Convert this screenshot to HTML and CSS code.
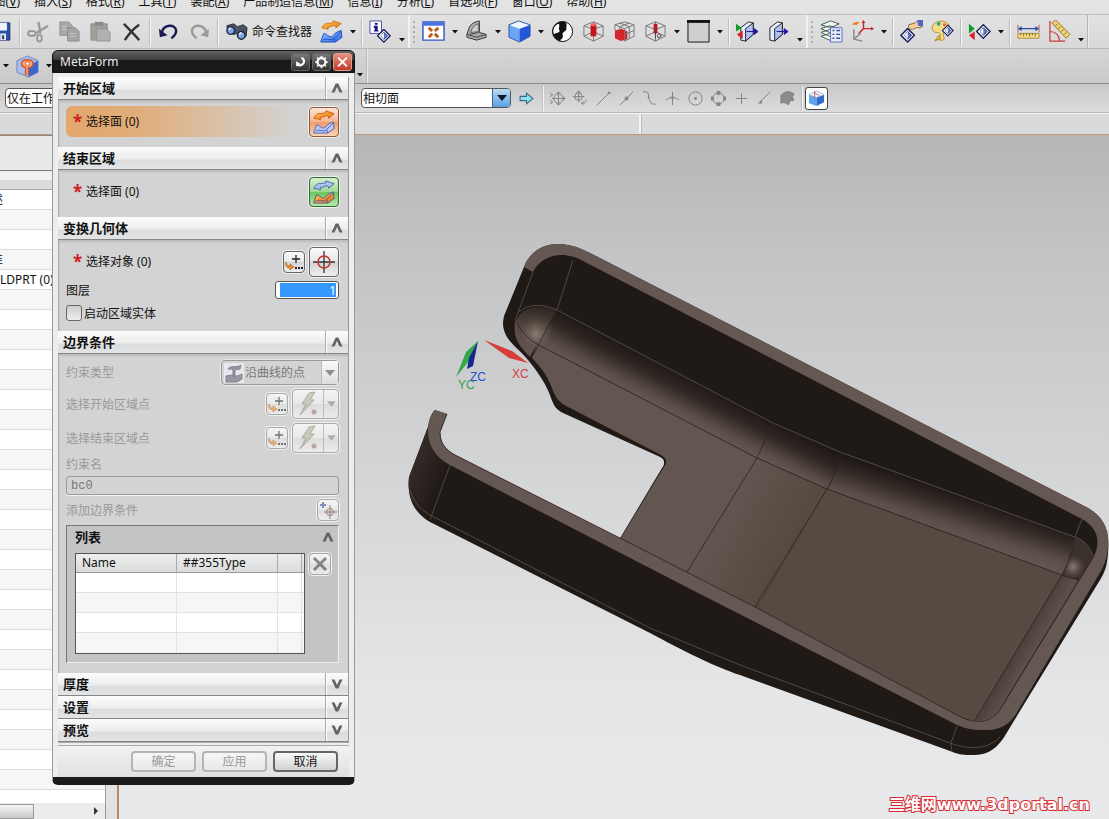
FILE: index.html
```html
<!DOCTYPE html>
<html lang="zh-CN">

<head>
    <meta charset="UTF-8">
    <meta name="viewport" content="width=device-width, initial-scale=1.0">
    <title>MetaForm</title>
    <link rel="stylesheet" href="styles.css">
</head>

<body>
    <svg class="symbols" aria-hidden="true">
        <linearGradient id="blueFace" x1="0" y1="0" x2="1" y2="1">
            <stop offset="0" stop-color="#9cc4ff" />
            <stop offset="1" stop-color="#2b62e0" />
        </linearGradient>
        <linearGradient id="orangeFace" x1="0" y1="0" x2="1" y2="1">
            <stop offset="0" stop-color="#ffd257" />
            <stop offset="1" stop-color="#e8640c" />
        </linearGradient>
        <symbol id="wirecube" viewBox="0 0 24 24">
            <path d="M2 6L12 2L22 6V17L12 22L2 17ZM2 6L12 10L22 6M12 10V22M12 2V12M2 17L12 12L22 17" fill="none" stroke="#777" />
        </symbol>
        <symbol id="diamond" viewBox="0 0 16 16">
            <path d="M1 8L8 1L15 8L8 15Z" fill="#fff" stroke="#15205c" stroke-width="1.500" />
            <path d="M5 8L8 4L12 8L8 12Z" fill="#5d7bd0" stroke="#15205c" />
            <path d="M8 4L5 8L8 12Z" fill="#fff" />
        </symbol>
        <symbol id="drop" viewBox="0 0 6 4">
            <path d="M0 0H6L3 3.500Z" fill="#111" />
        </symbol>
        <symbol id="up" viewBox="0 0 14 12">
            <path d="M1.500 10.500L5.700 1.500H8.300L12.500 10.500H9.500L7 5L4.500 10.500Z" fill="#636363" />
        </symbol>
        <symbol id="down" viewBox="0 0 14 12">
            <path d="M1.500 1.500L5.700 10.500H8.300L12.500 1.500H9.500L7 7L4.500 1.500Z" fill="#636363" />
        </symbol>
        <symbol id="points" viewBox="0 0 20 20">
            <path d="M12 3V11M8 7H16" stroke="#222" stroke-width="1.300" />
            <path d="M2 10C2 13 4 14 6 14V12L10 15L6 18V16C3 16 1 14 2 10Z" fill="#f09030" stroke="#a55510" stroke-width=".6" />
            <path d="M11 16h2M14 16h2M17 16h2" stroke="#222" stroke-width="2" />
        </symbol>
        <symbol id="bolt" viewBox="0 0 24 26">
            <path d="M13 2L19 1L14 9H18L4 24L10 13H6Z" fill="#b3b79a" stroke="#82846f" />
            <circle cx="18" cy="21" r="2.500" fill="#a07a76" />
        </symbol>
        <symbol id="sheetTop" viewBox="0 0 24 12">
            <path d="M1 9C3 5 6 3 8 4L14 3V1L23 4L17 9V7C13 5 11 9 8 8V11C6 9 4 10 1 9Z" />
        </symbol>
        <symbol id="sheetLow" viewBox="0 0 24 14">
            <path d="M1 12L4 4C8 5 11 10 14 6C16 3 19 2 22 1L23 8L16 13H1Z" />
            <path d="M3 11C8 8 12 13 15 9L22 2M16 13L15 9" fill="none" />
        </symbol>
    </svg>

    <nav class="menubar">
        <a href="#" class="clipped">视图(<u>V</u>)</a>
        <a href="#">插入(<u>S</u>)</a>
        <a href="#">格式(<u>R</u>)</a>
        <a href="#">工具(<u>T</u>)</a>
        <a href="#">装配(<u>A</u>)</a>
        <a href="#">产品制造信息(<u>M</u>)</a>
        <a href="#">信息(<u>I</u>)</a>
        <a href="#">分析(<u>L</u>)</a>
        <a href="#">首选项(<u>F</u>)</a>
        <a href="#">窗口(<u>O</u>)</a>
        <a href="#">帮助(<u>H</u>)</a>
    </nav>

    <div class="toolbar">
        <button class="tool save" aria-label="保存"><svg viewBox="0 0 12 24"><path d="M-8 3H10V21H-8Z" fill="#2c51a8" stroke="#1b2f6e" /><path d="M-4 3H7V11H-4Z" fill="#eef4ff" /><path d="M0 14H6V21H0Z" fill="#dfe4ee" /><path d="M2 16H4V20H2Z" fill="#1b2f6e" /></svg></button>
        <span class="sep"></span>
        <button class="tool" aria-label="剪切"><svg viewBox="0 0 24 24"><path d="M12 2L14 14M22 6L9 14" stroke="#999" stroke-width="2.500" /><ellipse cx="5" cy="14" rx="4" ry="2.500" fill="none" stroke="#999" stroke-width="2" /><ellipse cx="13" cy="19" rx="2.500" ry="3.500" fill="none" stroke="#999" stroke-width="2" /></svg></button>
        <button class="tool" aria-label="复制"><svg viewBox="0 0 24 24"><path d="M2 2H11L15 6V16H2Z" fill="#a8a8a8" stroke="#919191" /><path d="M10 8H18L22 12V22H10Z" fill="#a3a3a3" stroke="#8d8d8d" /><path d="M4 7H9M4 10H9M12 14H19M12 17H19" stroke="#c9c9c9" /></svg></button>
        <button class="tool" aria-label="粘贴"><svg viewBox="0 0 24 24"><path d="M2 4H19V21H2Z" fill="#a19f98" stroke="#8f8f8f" /><path d="M6 2H15V6H6Z" fill="#8a8a8a" /><path d="M8 9H18L22 13V22H8Z" fill="#b0b0b0" stroke="#939393" /></svg></button>
        <button class="tool" aria-label="删除"><svg viewBox="0 0 24 24"><path d="M4 4C9 9 15 15 20 21M20 5C14 9 9 15 5 21" fill="none" stroke="#333" stroke-width="2.500" /></svg></button>
        <span class="sep"></span>
        <button class="tool" aria-label="撤消"><svg viewBox="0 0 24 24"><path d="M5 13C7 4 19 4 20 11C20 15 18 17 15 19" fill="none" stroke="#1b1b52" stroke-width="2.500" /><path d="M2 9L3 18L11 16Z" fill="#1b1b52" /></svg></button>
        <button class="tool" aria-label="重做"><svg viewBox="0 0 24 24"><path d="M19 13C17 4 5 4 4 11C4 15 6 17 9 19" fill="none" stroke="#999" stroke-width="2.500" /><path d="M22 9L21 18L13 16Z" fill="#999" /></svg></button>
        <span class="sep"></span>
        <button class="tool" aria-label="查找"><svg viewBox="0 0 24 24"><path d="M2 6L9 4L13 7L19 5L23 8L22 17L16 20L12 14L9 15L3 12Z" fill="#4c5468" stroke="#2a2e3c" /><circle cx="6" cy="11" r="4" fill="#7da3e8" stroke="#23283a" stroke-width="1.500" /><circle cx="17" cy="16" r="4" fill="#7da3e8" stroke="#23283a" stroke-width="1.500" /><path d="M4 10L6 8M15 15L17 13" stroke="#fff" stroke-width="1.500" /></svg></button>
        <button class="finder">命令查找器</button>
        <button class="tool" aria-label="变换片体"><svg viewBox="0 0 24 24"><use href="#sheetTop" width="24" height="11" fill="url(#orangeFace)" stroke="#c9720c" /><use href="#sheetLow" y="10" width="24" height="14" fill="url(#blueFace)" stroke="#1d50c8" /></svg></button>
        <button class="drop" aria-label="更多"><svg viewBox="0 0 6 4"><use href="#drop" /></svg></button>
        <span class="sep"></span>
        <button class="tool" aria-label="信息"><svg viewBox="0 0 24 24"><path d="M1 1H13V14H1Z" fill="#fff" stroke="#4a4aa8" /><path d="M6 3H9V5H6ZM5 6H9V11H10V12H5V11H6V8H5Z" fill="#10107a" /><use href="#diamond" x="8" y="9" width="15" height="15" /></svg></button>
        <button class="drop low" aria-label="更多"><svg viewBox="0 0 6 4"><use href="#drop" /></svg></button>
        <span class="grip"></span>
        <button class="tool" aria-label="适合窗口"><svg viewBox="0 0 24 24"><path d="M1 2H23V21H1Z" fill="#fff" stroke="#3656c4" stroke-width="1.500" /><path d="M1 2H23V6H1Z" fill="#4b74e0" /><path d="M7 8L17 18M17 8L7 18" stroke="#b8581c" stroke-width="3" stroke-dasharray="5 4" /></svg></button>
        <button class="drop" aria-label="更多"><svg viewBox="0 0 6 4"><use href="#drop" /></svg></button>
        <button class="tool" aria-label="定向视图"><svg viewBox="0 0 24 24"><path d="M2 15L4 9C5 5 9 2 15 1V13L22 15V18L12 21L2 18Z" fill="#a9a9a9" stroke="#333" /><path d="M6 13C7 8 10 5 14 4V12Z" fill="#cfcfcf" stroke="#666" /><path d="M2 15L12 18L22 15M14 13L5 15" fill="none" stroke="#444" /></svg></button>
        <button class="drop" aria-label="更多"><svg viewBox="0 0 6 4"><use href="#drop" /></svg></button>
        <button class="tool" aria-label="着色"><svg viewBox="0 0 24 24"><path d="M1 5L12 9V23L1 18Z" fill="#6ba6f5" /><path d="M12 9L23 5V17L12 23Z" fill="#2458da" /><path d="M1 5L11 1L23 5L12 9Z" fill="#eef6ff" /><path d="M1 5L11 1L23 5V17L12 23L1 18Z" fill="none" stroke="#2c4fa6" /></svg></button>
        <button class="drop" aria-label="更多"><svg viewBox="0 0 6 4"><use href="#drop" /></svg></button>
        <button class="tool" aria-label="背景"><svg viewBox="0 0 24 24"><circle cx="12" cy="12" r="10.500" fill="#111" /><path d="M15 2C23 5 25 14 19 20C16 22 12 23 9 21C12 20 13 18 12 15C12 12 17 12 16 8C16 6 17 4 15 2Z" fill="#fff" /><path d="M3 15C1 10 4 5 8 4C10 6 7 9 9 11C9 14 5 13 3 15Z" fill="#fff" /><circle cx="12" cy="12" r="10.500" fill="none" stroke="#111" /></svg></button>
        <button class="tool" aria-label="剖切一"><svg viewBox="0 0 24 24"><use href="#wirecube" width="24" height="24" /><path d="M9 5H15V17H9Z" fill="#c4141c" /><ellipse cx="12" cy="5" rx="3" ry="1.500" fill="#f06464" /></svg></button>
        <button class="tool" aria-label="剖切二"><svg viewBox="0 0 24 24"><path d="M2 11L9 9L15 12V20L8 22L2 19Z" fill="#d3272d" /><path d="M2 5L12 2L22 5V17L12 22M2 11V5L12 9L22 5M12 9V22M7 3L17 7V19M17 3L7 7V11M12 15L22 11" fill="none" stroke="#777" /></svg></button>
        <button class="tool" aria-label="剖切三"><svg viewBox="0 0 24 24"><use href="#wirecube" width="24" height="24" /><path d="M10 4H14V14H10Z" fill="#b81c22" /><path d="M12 10V19M14 16L16 14L18 17L15 19Z" fill="none" stroke="#444" /></svg></button>
        <button class="drop" aria-label="更多"><svg viewBox="0 0 6 4"><use href="#drop" /></svg></button>
        <button class="tool" aria-label="背景色"><svg viewBox="0 0 24 24"><path d="M1 1H23V23H1Z" fill="#cfcfcf" stroke="#111" /><path d="M0 0H24V3H0Z" fill="#111" /></svg></button>
        <button class="drop" aria-label="更多"><svg viewBox="0 0 6 4"><use href="#drop" /></svg></button>
        <span class="sep"></span>
        <button class="tool" aria-label="移动面"><svg viewBox="0 0 24 24"><path d="M5 8L13 2L18 3V15L10 22L5 21Z" fill="#e4ecff" stroke="#222" /><path d="M10 9L18 3V15L10 22Z" fill="#aebff0" stroke="#222" /><path d="M11 12H19V9L23 12L19 15V12" fill="#1717a0" stroke="#1717a0" /><path d="M0 4L6 8L0 12Z" fill="#109a28" /><path d="M7 11L1 15L7 20Z" fill="#d4222a" /></svg></button>
        <button class="tool" aria-label="拉出面"><svg viewBox="0 0 24 24"><path d="M3 8L11 2L16 3V15L8 22L3 21Z" fill="#e4ecff" stroke="#222" /><path d="M8 9L16 3V15L8 22Z" fill="#aebff0" stroke="#222" /><path d="M10 12H18V9L22 12L18 15V12" fill="#1717a0" stroke="#1717a0" /></svg></button>
        <button class="drop low" aria-label="更多"><svg viewBox="0 0 6 4"><use href="#drop" /></svg></button>
        <span class="grip"></span>
        <button class="tool" aria-label="图层设置"><svg viewBox="0 0 24 24"><path d="M1 17L10 21L20 17L10 14ZM1 13L10 17L20 13L10 10ZM1 9L10 13L20 9L10 6ZM1 5L11 1L20 4L11 8Z" fill="#f3f7f3" stroke="#3c5c50" /><path d="M11 8H23V23H11Z" fill="#e6ecff" stroke="#5670c0" /><path d="M13 11H15M17 11H21M13 15H15M17 15H21M13 19H15M17 19H21" stroke="#3b4f98" stroke-width="1.500" /></svg></button>
        <button class="tool" aria-label="WCS"><svg viewBox="0 0 24 24"><path d="M13 1V9M13 9L23 9M13 9L8 14" fill="none" stroke="#c82a2a" stroke-width="1.500" /><path d="M11 3L13 0L15 3ZM21 7L24 9L21 11Z" fill="#c82a2a" /><path d="M3 10V20L12 22M3 20L10 14" fill="none" stroke="#8a8a8a" stroke-width="1.500" /><path d="M1 5C3 2 5 2 9 2L6 5Z" fill="#ee7a1c" /></svg></button>
        <button class="drop" aria-label="更多"><svg viewBox="0 0 6 4"><use href="#drop" /></svg></button>
        <span class="sep"></span>
        <button class="tool" aria-label="编辑显示"><svg viewBox="0 0 24 24"><path d="M9 5L16 3L18 1L23 2L22 8L17 8L13 10L9 9Z" fill="#f4cf9c" stroke="#8c6c40" /><path d="M18 0H24V7L19 6Z" fill="#5266c8" /><use href="#diamond" x="0" y="8" width="16" height="16" /></svg></button>
        <button class="tool" aria-label="颜色"><svg viewBox="0 0 24 24"><path d="M3 4C8 -1 19 1 19 7C19 11 15 10 13 13C12 17 15 18 13 21H9C9 17 11 14 8 13C2 14 -1 9 3 4Z" fill="#f9dc86" stroke="#b09038" /><circle cx="8" cy="4" r="2" fill="#2ba3a5" /><circle cx="14" cy="5" r="1.500" fill="#d9643c" /><path d="M4 22L8 16L10 19Z" fill="#f4c33c" stroke="#b08a20" /><use href="#diamond" x="11" y="4" width="13" height="14" /></svg></button>
        <span class="sep"></span>
        <button class="tool" aria-label="显示隐藏"><svg viewBox="0 0 24 24"><path d="M1 4L7 9L1 14Z" fill="#109a28" /><path d="M7 12L1 16L7 21Z" fill="#d4222a" /><use href="#diamond" x="8" y="4" width="16" height="16" /></svg></button>
        <button class="drop" aria-label="更多"><svg viewBox="0 0 6 4"><use href="#drop" /></svg></button>
        <span class="sep"></span>
        <button class="tool" aria-label="测量距离"><svg viewBox="0 0 24 24"><path d="M1 5V13M23 5V13" stroke="#c85050" /><path d="M2 9H22M5 7L2 9L5 11M19 7L22 9L19 11" fill="none" stroke="#2b4ca8" stroke-width="1.300" /><path d="M1 14H23V19H1Z" fill="#f6dd8c" stroke="#a68c3c" /><path d="M4 14V16M7 14V17M10 14V16M13 14V17M16 14V16M19 14V17" stroke="#76601c" /></svg></button>
        <button class="tool" aria-label="测量角度"><svg viewBox="0 0 24 24"><path d="M2 1V22H18M2 12C8 12 12 16 12 22" fill="none" stroke="#cc3844" stroke-width="1.300" /><path d="M4 3L8 0L23 15L19 19Z" fill="#f2d272" stroke="#8c7430" /><path d="M8 6L10 4M11 9L13 7M14 12L16 10M17 15L19 13" stroke="#76601c" /></svg></button>
        <button class="drop low" aria-label="更多"><svg viewBox="0 0 6 4"><use href="#drop" /></svg></button>
        <span class="bar-end"></span>
    </div>

    <div class="toolbar second">
        <button class="drop" aria-label="更多"><svg viewBox="0 0 6 4"><use href="#drop" /></svg></button>
        <button class="tool" aria-label="特征"><svg viewBox="0 0 24 24"><path d="M1 6L12 1L23 6V18L13 23L1 18Z" fill="#a9c0f0" stroke="#7088c0" /><path d="M13 11L23 6V18L13 23Z" fill="#3c66cf" /><path d="M10 21V13C4 12 4 5 12 5C20 5 19 13 13 13V21" fill="#f7a982" stroke="#d8541c" stroke-width="1.500" /><circle cx="12" cy="9" r="2" fill="#fff" stroke="#d8541c" /></svg></button>
        <button class="drop" aria-label="更多"><svg viewBox="0 0 6 4"><use href="#drop" /></svg></button>
        <span class="under-dialog"></span>
        <button class="drop low" aria-label="更多"><svg viewBox="0 0 6 4"><use href="#drop" /></svg></button>
        <span class="bar-end"></span>
    </div>

    <div class="selectbar">
        <label class="combo scope"><select aria-label="选择范围"><option>仅在工作部件内</option></select></label>
        <label class="combo rule">
            <select aria-label="面规则"><option>相切面</option></select>
            <span class="combo-arrow"><svg viewBox="0 0 12 8"><path d="M1 1H11L6 7Z" fill="#101828" /></svg></span>
        </label>
        <button class="next" aria-label="下一步"><svg viewBox="0 0 14 14"><path d="M1 5H7V2L13 7L7 12V9H1Z" fill="#8fe0f2" stroke="#3b6a80" /></svg></button>
        <span class="sep"></span>
        <button class="snap" aria-label="启用捕捉"><svg viewBox="0 0 18 18"><circle cx="10" cy="9" r="5" /><path d="M10 2V16M3 9H17M8 4L10 2L12 4M8 14L10 16L12 14M15 7L17 9L15 11M1 3L4 5L1 7M1 11L4 13L1 15" /></svg></button>
        <button class="snap" aria-label="清除捕捉"><svg viewBox="0 0 18 18"><circle cx="7" cy="7" r="4" /><path d="M7 1V13M1 7H13M5 3L7 1L9 3M10 14C13 15 15 13 15 10M13 12L10 14L12 16" /></svg></button>
        <button class="snap" aria-label="端点"><svg viewBox="0 0 18 18"><path d="M2 16L15 3" /><circle class="dot" cx="15" cy="3" r="1.500" /></svg></button>
        <button class="snap" aria-label="中点"><svg viewBox="0 0 18 18"><path d="M2 16L16 2" /><circle class="dot" cx="9" cy="9" r="2" /></svg></button>
        <button class="snap" aria-label="控制点"><svg viewBox="0 0 18 18"><path d="M2 2H6C9 3 7 7 9 10C10 15 12 15 16 15" /><circle class="dot" cx="8" cy="8" r="1" /></svg></button>
        <button class="snap" aria-label="交点"><svg viewBox="0 0 18 18"><path d="M9 2V16M2 11C5 7 13 7 16 11" /><circle class="dot" cx="9" cy="8" r="1.500" /></svg></button>
        <button class="snap" aria-label="圆心"><svg viewBox="0 0 18 18"><circle cx="9" cy="9" r="7" /><circle class="dot" cx="9" cy="9" r="1.500" /></svg></button>
        <button class="snap" aria-label="象限点"><svg viewBox="0 0 18 18"><circle cx="9" cy="9" r="6" /><path class="dot" d="M7 1H11V5H7ZM7 13H11V17H7ZM1 7H4V11H1ZM14 7H17V11H14Z" /></svg></button>
        <button class="snap" aria-label="现有点"><svg viewBox="0 0 18 18"><path d="M9 4V15M3 9H15" /></svg></button>
        <button class="snap" aria-label="曲线上的点"><svg viewBox="0 0 18 18"><path d="M2 15L15 2" /><circle class="dot" cx="5" cy="13" r="1.500" /></svg></button>
        <button class="snap" aria-label="面上的点"><svg viewBox="0 0 18 18"><path d="M2 6C5 2 10 0 16 4L12 11L10 16C8 13 4 13 2 14Z" fill="#8b8b8f" /><circle class="dot" cx="14" cy="10" r="2" /></svg></button>
        <span class="sep"></span>
        <button class="toggle" aria-label="小平面"><svg viewBox="0 0 18 18"><path d="M1 5L9 8V17L1 14Z" fill="#62a4ec" /><path d="M9 8L17 5V13L9 17Z" fill="#2e6cc8" /><path d="M1 5L9 1L17 5L9 8Z" fill="#f3f8ff" stroke="#7b99c4" stroke-width=".7" /><path d="M7 1V9M7 3L12 6" fill="none" stroke="#c85a5a" /></svg></button>
    </div>

    <div class="cuebar">
        <div class="cue"></div>
        <div class="status"></div>
    </div>

    <main class="workspace">
        <aside class="navigator">
            <div class="nav-title"></div>
            <div class="nav-head"></div>
            <ul class="tree">
                <li><span class="tail">描述</span></li>
                <li></li>
                <li></li>
                <li><span class="tail">基准</span></li>
                <li>LDPRT&nbsp;(0)</li>
            </ul>
            <div class="scrollbar">
                <span class="thumb"></span>
                <svg viewBox="0 0 6 8"><path d="M1 0L5 4L1 8Z" fill="#333" /></svg>
            </div>
        </aside>
        <div class="splitter"></div>

        <section class="viewport">
            <svg class="model" viewBox="119 135 990 684" preserveAspectRatio="xMinYMin slice">
                <defs>
                    <linearGradient id="filletA" gradientUnits="userSpaceOnUse" x1="652" y1="360" x2="633" y2="397">
                        <stop offset="0" stop-color="#201a17" />
                        <stop offset=".3" stop-color="#2e2622" />
                        <stop offset=".75" stop-color="#5b4e48" />
                        <stop offset="1" stop-color="#685a54" />
                    </linearGradient>
                    <linearGradient id="filletB" gradientUnits="userSpaceOnUse" x1="950" y1="492" x2="937" y2="532">
                        <stop offset="0" stop-color="#201a17" />
                        <stop offset=".3" stop-color="#332a26" />
                        <stop offset=".75" stop-color="#5b4e48" />
                        <stop offset="1" stop-color="#63554f" />
                    </linearGradient>
                    <linearGradient id="fade" gradientUnits="userSpaceOnUse" x1="725" y1="510" x2="790" y2="545">
                        <stop offset="0" stop-color="#63554f" />
                        <stop offset="1" stop-color="#574a42" />
                    </linearGradient>
                    <linearGradient id="filletC" gradientUnits="userSpaceOnUse" x1="1018" y1="647" x2="1040" y2="660">
                        <stop offset="0" stop-color="#4a3f39" />
                        <stop offset=".6" stop-color="#5d504a" />
                        <stop offset="1" stop-color="#453a35" />
                    </linearGradient>
                    <linearGradient id="leftWall" gradientUnits="userSpaceOnUse" x1="412" y1="470" x2="442" y2="482">
                        <stop offset="0" stop-color="#332a26" />
                        <stop offset="1" stop-color="#201a17" />
                    </linearGradient>
                    <linearGradient id="corner" gradientUnits="userSpaceOnUse" x1="538" y1="303" x2="530" y2="350">
                        <stop offset="0" stop-color="#2a221f" />
                        <stop offset=".6" stop-color="#56493f" />
                        <stop offset="1" stop-color="#63554f" />
                    </linearGradient>
                    <radialGradient id="glint">
                        <stop offset="0" stop-color="#8b7e78" />
                        <stop offset=".5" stop-color="#6a5c56" stop-opacity=".6" />
                        <stop offset="1" stop-color="#4a3f3a" stop-opacity="0" />
                    </radialGradient>
                </defs>

                <!-- outer walls -->
                <path d="M524 267C530 251 545 243 560 244C573 245 580 248 590 253L1088 508C1104 517 1110 531 1108 553C1107 566 1105 572 1100 580L1006 734C998 748 988 756 970 755C962 755 957 754 950 751L740 675C715 667 680 649 650 633L430 522C413 512 407 497 409 477L428 427C429 420 431 414 435 410L447 414L440 432C440 446 449 452 457 456L620 539L663 467C665 462 665 459 658 456L563 413C555 409 553 404 550 395C544 380 536 370 528 360C520 350 509 343 505 333C502 325 503 322 504 316Z" fill="#201a17" />
                <path d="M428 427C428 445 437 456 450 464L430 520C413 511 407 497 409 477Z" fill="url(#leftWall)" />

                <!-- floor -->
                <path d="M532 358L537 344L757 458L690 580L620 539L664 467C668 461 666 458 661 455L570 408C560 403 557 400 553 391C549 378 541 367 532 358Z" fill="#63554f" />
                <path d="M757 458L827 489L755 612L687 576Z" fill="url(#fade)" />
                <path d="M827 489L1062 575L975 722L955 716L755 612Z" fill="#574a42" />

                <!-- fillets -->
                <path d="M557 310L773 423L840 452C839 465 834 478 827 489L757 458L537 344Z" fill="url(#filletA)" />
                <path d="M840 452L1075 537C1072 552 1068 564 1062 575L827 489C835 476 839 465 840 452Z" fill="url(#filletB)" />
                <path d="M515 325C518 309 535 302 557 310L537 344L530 357C520 347 513 338 515 325Z" fill="url(#corner)" />
                <path d="M1062 575L1080 578L1000 709C994 718 987 722 975 721Z" fill="url(#filletC)" />
                <path d="M1075 537C1086 541 1093 548 1092 560L1078 581L1062 575Z" fill="#3a312d" />
                <circle cx="536" cy="334" r="20" fill="url(#glint)" />
                <circle cx="1073" cy="567" r="13" fill="url(#glint)" />

                <!-- rim -->
                <path d="M524 267C530 251 545 243 560 244C573 245 580 248 590 253L1088 508C1104 517 1110 531 1108 547C1107 560 1103 568 1098 576L1016 714C1009 726 996 731 983 730C973 730 966 729 957 725L700 594L450 465C437 458 428 447 428 431C428 422 431 414 435 410L447 414L440 432C440 446 449 452 457 456L620 538L755 607L955 714C964 720 972 722 982 720C990 719 996 715 1001 708L1094 556C1101 542 1098 528 1082 519L585 262C573 255 562 254 553 256C543 259 536 265 533 272Z" fill="#655752" />

                <!-- edges -->
                <g fill="none" stroke="#5c5551" stroke-width=".8">
                    <path d="M573 260L557 310M533 272L516 318C513 330 518 338 530 350M519 312C527 304 542 303 557 310L773 423L840 452L1075 537C1085 541 1092 548 1093 558" />
                    <path d="M1082 519L1075 537M450 465L430 520M410 490C414 503 420 509 430 515L650 628L740 665L950 743C968 750 988 750 1000 737M957 726L951 743L952 752" />
                </g>
                <g fill="none" stroke="#2a2320" stroke-width=".8">
                    <path d="M557 310L532 357M517 323C522 332 528 339 537 344L757 458L827 489L1062 575C1068 578 1074 579 1079 578M773 423L757 458L687 572M840 452C839 466 835 476 827 489L755 607M1075 537C1073 552 1069 564 1062 575L975 720M620 539L663 467" />
                    <path d="M447 414L440 432C440 446 449 452 457 456L620 538L755 607L955 714C980 728 994 720 1001 708L1094 556" />
                </g>

                <!-- work coordinate system -->
                <path d="M478 341L466 352L456 377L469 361Z" fill="#35a848" />
                <path d="M478 341L469 358L467 369L473 366Z" fill="#16288f" />
                <path d="M484 340L512 351L528 363L509 358Z" fill="#d63c38" />
                <g class="axis">
                    <text x="512" y="378" fill="#d04040">XC</text>
                    <text x="458" y="389" fill="#3aa048">YC</text>
                    <text x="470" y="381" fill="#2250d0">ZC</text>
                </g>
            </svg>
            <div class="watermark">三维网www.3dportal.cn</div>
        </section>
    </main>

    <form class="dialog">
        <header class="titlebar">
            <h1>MetaForm</h1>
            <button type="button" aria-label="重置"><svg viewBox="0 0 16 16"><path d="M4 11C8 13 12 11 12 7C12 5 11 4 9 3" fill="none" stroke="#fff" stroke-width="2.500" /><path d="M3 7V13L8 10Z" fill="#fff" /></svg></button>
            <button type="button" aria-label="设置"><svg viewBox="0 0 16 16"><circle cx="8" cy="8" r="4.500" fill="none" stroke="#fff" stroke-width="2.500" /><path d="M8 1V3M8 13V15M1 8H3M13 8H15M3 3L4 4M12 12L13 13M3 13L4 12M12 4L13 3" stroke="#fff" stroke-width="2" /></svg></button>
            <button type="button" class="close" aria-label="关闭"><svg viewBox="0 0 16 16"><path d="M3 3L13 13M13 3L3 13" stroke="#fff" stroke-width="2.200" /></svg></button>
        </header>

        <div class="sections">
            <button type="button" class="section-head"><span>开始区域</span><i><svg viewBox="0 0 14 12"><use href="#up" /></svg></i></button>
            <div class="section pick">
                <div class="row">
                    <div class="highlight"><b>*</b>选择面 (0)</div>
                    <button type="button" class="big orange" aria-label="选择开始面"><svg viewBox="0 0 24 24"><use href="#sheetTop" width="24" height="11" fill="url(#orangeFace)" stroke="#c9580c" /><use href="#sheetLow" y="11" width="24" height="13" fill="#b9c9f6" stroke="#4860b8" /></svg></button>
                </div>
            </div>

            <button type="button" class="section-head"><span>结束区域</span><i><svg viewBox="0 0 14 12"><use href="#up" /></svg></i></button>
            <div class="section pick">
                <div class="row">
                    <div class="prompt"><b>*</b>选择面 (0)</div>
                    <button type="button" class="big green" aria-label="选择结束面"><svg viewBox="0 0 24 24"><use href="#sheetTop" width="24" height="11" fill="#a9c4ee" stroke="#4860b8" /><use href="#sheetLow" y="11" width="24" height="13" fill="url(#orangeFace)" stroke="#4a58a0" /></svg></button>
                </div>
            </div>

            <button type="button" class="section-head"><span>变换几何体</span><i><svg viewBox="0 0 14 12"><use href="#up" /></svg></i></button>
            <div class="section">
                <div class="row">
                    <div class="prompt"><b>*</b>选择对象 (0)</div>
                    <button type="button" class="small" aria-label="点构造器"><svg viewBox="0 0 20 20"><use href="#points" /></svg></button>
                    <button type="button" class="big" aria-label="选择对象"><svg viewBox="0 0 24 24"><path d="M12 1V23M1 12H23" stroke="#333" stroke-width="1.300" /><circle cx="12" cy="12" r="6" fill="none" stroke="#c83030" stroke-width="1.500" /></svg></button>
                </div>
                <div class="row">
                    <label for="layer">图层</label>
                    <input id="layer" class="layer" type="text" value="1">
                </div>
                <div class="row check">
                    <input id="solid" type="checkbox">
                    <label for="solid">启动区域实体</label>
                </div>
            </div>

            <button type="button" class="section-head"><span>边界条件</span><i><svg viewBox="0 0 14 12"><use href="#up" /></svg></i></button>
            <div class="section disabled">
                <div class="row">
                    <label for="ctype">约束类型</label>
                    <span class="type-box">
                        <svg viewBox="0 0 20 20"><path d="M4 6C6 2 14 5 17 2L16 6C13 7 12 6 11 7V13H9V7C7 5 6 7 4 6ZM2 13L8 12C11 14 14 13 18 11V16L13 19H2Z" fill="#9b96a5" stroke="#85808f" /></svg>
                        <select id="ctype" disabled><option>沿曲线的点</option></select>
                        <span class="type-arrow"><svg viewBox="0 0 12 8"><path d="M1 1H11L6 7Z" fill="#8d8d8d" /></svg></span>
                    </span>
                </div>
                <div class="row">
                    <span class="label">选择开始区域点</span>
                    <button type="button" class="small" disabled aria-label="点构造器"><svg viewBox="0 0 20 20"><use href="#points" /></svg></button>
                    <button type="button" class="split" disabled aria-label="推断点"><svg viewBox="0 0 24 26"><use href="#bolt" /></svg><span><svg viewBox="0 0 10 6"><path d="M0 0H10L5 6Z" fill="#888" /></svg></span></button>
                </div>
                <div class="row">
                    <span class="label">选择结束区域点</span>
                    <button type="button" class="small" disabled aria-label="点构造器"><svg viewBox="0 0 20 20"><use href="#points" /></svg></button>
                    <button type="button" class="split" disabled aria-label="推断点"><svg viewBox="0 0 24 26"><use href="#bolt" /></svg><span><svg viewBox="0 0 10 6"><path d="M0 0H10L5 6Z" fill="#888" /></svg></span></button>
                </div>
                <label class="label" for="cname">约束名</label>
                <input id="cname" class="cname" type="text" value="bc0" disabled>
                <div class="row">
                    <span class="label">添加边界条件</span>
                    <button type="button" class="small" disabled aria-label="添加"><svg viewBox="0 0 20 20"><path d="M5 2V8M2 5H8" stroke="#3c4c9c" stroke-width="2" /><path d="M12 5V19M6 12H19" stroke="#444" /><circle cx="12" cy="12" r="3.500" fill="none" stroke="#8c3030" /></svg></button>
                </div>
                <div class="list">
                    <div class="list-head"><span>列表</span><svg viewBox="0 0 14 12"><use href="#up" /></svg></div>
                    <div class="list-body">
                        <table>
                            <thead>
                                <tr><th class="wide">Name</th><th class="wide">##355Type</th><th></th><th class="edge"></th></tr>
                            </thead>
                            <tbody>
                                <tr><td></td><td></td><td></td><td></td></tr>
                                <tr><td></td><td></td><td></td><td></td></tr>
                                <tr><td></td><td></td><td></td><td></td></tr>
                                <tr><td></td><td></td><td></td><td></td></tr>
                            </tbody>
                        </table>
                        <button type="button" class="small" disabled aria-label="移除"><svg viewBox="0 0 20 20"><path d="M4 4L16 16M16 4L4 16" stroke="#444" stroke-width="3" /></svg></button>
                    </div>
                </div>
            </div>

            <button type="button" class="section-head"><span>厚度</span><i><svg viewBox="0 0 14 12"><use href="#down" /></svg></i></button>
            <button type="button" class="section-head"><span>设置</span><i><svg viewBox="0 0 14 12"><use href="#down" /></svg></i></button>
            <button type="button" class="section-head"><span>预览</span><i><svg viewBox="0 0 14 12"><use href="#down" /></svg></i></button>
        </div>

        <footer class="actions">
            <button type="button" disabled>确定</button>
            <button type="button" disabled>应用</button>
            <button type="button" class="cancel">取消</button>
        </footer>
    </form>
</body>

</html>
```
FILE: styles.css
```css
*{
    margin: 0;
    padding: 0;
    box-sizing: border-box;
}
body{
    display: flex;
    flex-direction: column;
    height: 100vh;
    overflow: hidden;
    background-color: #d9d9d9;
    color: #111;
    font: 12px/15px "Noto Sans", "Noto Sans CJK SC", sans-serif;
}
button, input, select{
    font: inherit;
    color: inherit;
    border: none;
    background: none;
    appearance: none;
}
svg{
    display: block;
    flex: none;
}
.symbols{
    position: absolute;
    width: 0;
    height: 0;
}

/* menu */
.menubar{
    display: flex;
    flex: none;
    align-items: flex-end;
    gap: 14px;
    height: 15px;
    padding-bottom: 5px;
    background-color: #e3e3e3;
    border-bottom: 1px solid #bdbdbd;
}
.menubar a{
    color: #111;
    text-decoration: none;
    white-space: nowrap;
}
.menubar .clipped{
    display: flex;
    justify-content: flex-end;
    width: 20px;
}

/* toolbars */
.toolbar{
    display: flex;
    flex: none;
    align-items: center;
    height: 34px;
    background: linear-gradient(#e2e2e2, #d8d8d8);
    border-bottom: 1px solid #b9b9b9;
}
.second{
    height: 35px;
    background: linear-gradient(#d6d6d6, #c9c9c9);
    border-bottom: 1px solid #8c8c8c;
}
.tool{
    display: flex;
    flex: none;
    justify-content: center;
    width: 31px;
}
.tool svg{
    width: 23px;
    height: 23px;
}
.save{
    width: 17px;
    justify-content: flex-start;
}
.save svg{
    width: 12px;
}
.drop{
    display: flex;
    flex: none;
    justify-content: center;
    width: 12px;
}
.drop svg{
    width: 6px;
    height: 4px;
}
.low{
    align-self: flex-end;
    padding-bottom: 6px;
}
.finder{
    flex: none;
    padding: 0 4px 0 0;
    white-space: nowrap;
}
.sep{
    flex: none;
    width: 2px;
    height: 28px;
    margin: 0 2px;
    background-color: #f8f8f8;
    border-left: 1px solid #bcbcbc;
}
.grip{
    flex: none;
    align-self: stretch;
    width: 10px;
    border-left: 2px solid #f2f2f2;
    background: repeating-linear-gradient(#aaa 0 2px, transparent 2px 5px) 3px 6px / 2px 22px no-repeat;
}
.bar-end{
    align-self: stretch;
    width: 2px;
    border-left: 1px solid #b5b5b5;
    background-color: #ececec;
}
.under-dialog{
    flex: none;
    width: 299px;
}

/* selection bar */
.selectbar{
    display: flex;
    flex: none;
    align-items: center;
    height: 29px;
    padding-left: 5px;
    background: linear-gradient(#c8c8c8, #dcdcdc);
    border-bottom: 1px solid #b5b5b5;
}
.combo{
    display: flex;
    height: 20px;
    background-color: #fff;
    border: 1px solid #555;
    border-radius: 4px;
    overflow: hidden;
}
.combo select{
    flex: 1;
    padding-left: 1px;
}
.scope{
    width: 345px;
    margin-right: 11px;
}
.rule{
    width: 150px;
    margin-right: 8px;
}
.combo-arrow{
    display: flex;
    align-items: center;
    justify-content: center;
    width: 18px;
    background: linear-gradient(#bcdcf8, #5a9fe0);
    border-left: 1px solid #44668c;
}
.combo-arrow svg{
    width: 12px;
    height: 8px;
}
.next{
    margin-right: 6px;
}
.next svg{
    width: 15px;
    height: 15px;
}
.selectbar .sep{
    height: 25px;
}
.snap{
    display: flex;
    justify-content: center;
    width: 23px;
}
.snap svg{
    width: 17px;
    height: 17px;
    fill: none;
    stroke: #858080;
}
.snap .dot{
    fill: #8f7f7f;
    stroke: none;
}
.toggle{
    padding: 2px;
    background-color: #fff;
    border: 1px solid #444;
    border-radius: 3px;
}
.toggle svg{
    width: 17px;
    height: 17px;
}

.cuebar{
    display: flex;
    flex: none;
    height: 22px;
    border-top: 1px solid #f6f6f6;
    border-bottom: 1px solid #c39472;
    background-color: #dadada;
}
.cue{
    width: 641px;
    border-right: 2px solid #f5f5f5;
}
.status{
    flex: 1;
    border-left: 1px solid #bbb;
}

/* workspace */
.workspace{
    display: flex;
    flex: 1;
    min-height: 0;
}
.navigator{
    display: flex;
    flex: none;
    flex-direction: column;
    width: 106px;
    border-right: 1px solid #999;
}
.nav-title{
    flex: none;
    height: 36px;
    background-color: #e9e9e9;
    border-top: 1px solid #888;
    border-bottom: 1px solid #777;
}
.nav-head{
    flex: none;
    height: 19px;
    background: linear-gradient(#f0f0f0 50%, #dcdcdc 50%);
    border-bottom: 1px solid #aaa;
}
.tree{
    flex: 1;
    overflow: hidden;
    list-style: none;
    background: repeating-linear-gradient(#fff 0 19px, #ddd 19px 20px, #f6f6f6 20px 39px, #ddd 39px 40px);
}
.tree li{
    height: 20px;
    line-height: 20px;
}
.tail{
    display: flex;
    justify-content: flex-end;
    width: 3px;
    overflow: hidden;
    white-space: nowrap;
}
.scrollbar{
    display: flex;
    flex: none;
    align-items: center;
    justify-content: space-between;
    height: 16px;
    padding-right: 6px;
    background-color: #ececec;
}
.scrollbar svg{
    width: 6px;
    height: 8px;
}
.thumb{
    width: 34px;
    height: 15px;
    background: linear-gradient(#f5f5f5, #c8c8c8);
    border: 1px solid #999;
    border-left: none;
}
.splitter{
    flex: none;
    width: 13px;
    background-color: #e2e2e2;
    border-right: 2px solid #b88a6c;
}
.viewport{
    position: relative;
    flex: 1;
    min-width: 0;
    overflow: hidden;
    background: linear-gradient(#b6b6b7, #c3c4c5 18%, #e5e6e8 82%, #e8e9eb);
}
.model{
    width: 100%;
    height: 100%;
}
.axis{
    font: 12px "Liberation Sans", sans-serif;
}
.watermark{
    position: absolute;
    right: 19px;
    bottom: 4px;
    color: #fff;
    font: bold 16px/20px "DejaVu Sans", "Noto Sans CJK SC", sans-serif;
    -webkit-text-stroke: 2px #d82c34;
    paint-order: stroke fill;
}

/* dialog */
.dialog{
    position: absolute;
    top: 50px;
    left: 52px;
    width: 303px;
    background-color: #ededed;
    border: 1px solid #999;
    border-top: none;
    border-bottom: 8px solid #1b1b1b;
    border-radius: 6px;
}
.titlebar{
    display: flex;
    align-items: center;
    gap: 2px;
    height: 23px;
    margin: 0 -1px;
    padding: 0 2px 0 7px;
    color: #eee;
    background: linear-gradient(#646464, #3c3c3c 42%, #181818 42%, #1b1b1b);
    border: 1px solid #111;
    border-radius: 6px 6px 0 0;
}
.titlebar h1{
    flex: 1;
    font-size: 12px;
    font-weight: normal;
}
.titlebar button{
    width: 19px;
    height: 18px;
    padding: 1px;
    background: linear-gradient(#777, #333);
    border: 1px solid #666;
    border-radius: 3px;
}
.titlebar svg{
    width: 15px;
    height: 14px;
}
.titlebar .close{
    background: linear-gradient(#e89080, #c23a28);
    border-color: #e0a090;
}
.sections{
    margin: 4px 5px 2px;
    border-right: 1px solid #999;
    border-bottom: 1px solid #aaa;
}
.section-head{
    display: flex;
    align-items: stretch;
    width: 100%;
    height: 23px;
    background: linear-gradient(#fcfcfc, #ececec 55%, #dadcdd 60%, #e2e4e5);
    border-bottom: 1px solid #858585;
    color: #111;
    font-size: 13px;
    font-weight: bold;
    line-height: 22px;
    text-align: left;
}
.section-head span{
    flex: 1;
    padding-left: 5px;
}
.section-head i{
    display: flex;
    align-items: center;
    justify-content: center;
    width: 23px;
    border-left: 1px solid #aaa;
    box-shadow: inset 1px 0 #fff;
}
.section-head svg, .list-head svg{
    width: 14px;
    height: 12px;
}
.section{
    display: flex;
    flex-direction: column;
    gap: 4px;
    padding: 6px 9px 10px 7px;
    background-color: #d3d3d3;
    border-left: 1px solid #aaa;
    box-shadow: inset 0 2px 2px #bbb;
}
.row{
    display: flex;
    align-items: center;
    gap: 4px;
}
.row > label, .row > .label{
    flex: 1;
    white-space: nowrap;
}
.prompt, .highlight{
    display: flex;
    flex: 1;
    align-items: center;
    height: 31px;
    padding-left: 7px;
    white-space: pre;
}
.highlight{
    background: linear-gradient(90deg, #e3a76b, #e0ad7a 30%, #d3d3d3 96%);
    border-radius: 6px;
}
.prompt b, .highlight b{
    width: 13px;
    color: #c22;
    font-size: 17px;
}
.big, .small, .split{
    display: flex;
    flex: none;
    align-items: center;
    justify-content: center;
    background: linear-gradient(#fafafa, #e6e6e6 50%, #d3d3d3 52%, #eee);
    border: 1px solid #666;
    border-radius: 4px;
    box-shadow: 0 0 0 1px #f0f0f0;
}
.big{
    width: 30px;
    height: 30px;
}
.big svg{
    width: 24px;
    height: 24px;
}
.orange{
    background: linear-gradient(#fbe5d8, #f5b48c 50%, #ef9c68 52%, #fbd5b8);
    border-color: #8c5a3c;
}
.green{
    background: linear-gradient(#d6f0d0, #9ad890 50%, #6cc560 52%, #b5e8a8);
    border-color: #336633;
}
.small{
    width: 22px;
    height: 22px;
}
.small svg{
    width: 20px;
    height: 20px;
}
.layer{
    width: 64px;
    height: 18px;
    padding: 1px 2px 1px 4px;
    color: #fff;
    text-align: right;
    background: linear-gradient(#39f, #39f) content-box, #fff;
    border: 1px solid #555;
    border-radius: 3px;
}
.check{
    gap: 2px;
    padding-top: 2px;
}
.check input{
    width: 16px;
    height: 16px;
    background: linear-gradient(#ccc, #eee);
    border: 1px solid #666;
    border-radius: 3px;
}

.disabled label, .disabled .label{
    color: #999;
}
.disabled .small, .disabled .split{
    background: linear-gradient(#f4f4f4, #e8e8e8 50%, #dcdcdc 52%, #ececec);
    border-color: #aaa;
}
.disabled .small svg, .disabled .split svg{
    opacity: .6;
}
.type-box{
    display: flex;
    width: 118px;
    height: 25px;
    align-items: center;
    padding-left: 2px;
    color: #777;
    border: 1px solid #999;
    border-radius: 4px;
    box-shadow: 0 0 0 1px #e8e8e8;
}
.type-box > svg{
    width: 20px;
    height: 20px;
    background-color: #e8e8ec;
}
.type-box select{
    flex: 1;
    min-width: 0;
    padding-left: 1px;
    opacity: 1;
}
.type-arrow{
    display: flex;
    align-self: stretch;
    align-items: center;
    justify-content: center;
    width: 17px;
    background: linear-gradient(#fafafa, #dcdcdc);
    border-left: 1px solid #bbb;
}
.type-arrow svg{
    width: 12px;
    height: 8px;
}
.split{
    width: 47px;
    height: 30px;
}
.split > svg{
    width: 30px;
    height: 26px;
}
.split span{
    display: flex;
    align-self: stretch;
    align-items: center;
    justify-content: center;
    width: 15px;
    border-left: 1px solid #bbb;
}
.split span svg{
    width: 9px;
    height: 6px;
}
.cname{
    height: 19px;
    padding-left: 4px;
    color: #777;
    border: 1px solid #999;
    border-radius: 3px;
    font-family: "Liberation Mono", monospace;
    box-shadow: 0 1px #f3f3f3;
}
.list{
    padding: 0 3px 8px 8px;
    background-color: #c4c4c4;
    border: 1px solid #777;
    border-right-color: #eee;
    border-bottom-color: #eee;
}
.list-head{
    display: flex;
    align-items: center;
    justify-content: space-between;
    height: 22px;
    font-size: 13px;
    font-weight: bold;
}
.list-body{
    display: flex;
    align-items: flex-start;
    gap: 4px;
    padding: 5px 4px 0 0;
}
table{
    flex: 1;
    table-layout: fixed;
    border: 1px solid #555;
    border-spacing: 0;
    background-color: #fff;
}
th{
    height: 19px;
    padding-left: 6px;
    background: linear-gradient(#eee, #d9dbdb);
    border-right: 1px solid #aaa;
    border-bottom: 1px solid #999;
    font-size: 12px;
    font-weight: normal;
    line-height: 18px;
    text-align: left;
}
.wide{
    width: 101px;
}
.edge{
    width: 2px;
    padding: 0;
    border-right: none;
}
td{
    height: 20px;
    border-right: 1px solid #e2e2e2;
    border-bottom: 1px solid #e2e2e2;
}
td:last-child{
    border-right: none;
}
tbody tr:nth-child(even){
    background-color: #f6f6f6;
}
tbody tr:last-child td{
    border-bottom: none;
}

.actions{
    display: flex;
    justify-content: flex-end;
    gap: 6px;
    margin: 0 5px;
    padding: 5px 11px 5px;
    border-top: 1px solid #aaa;
    background: linear-gradient(#f2f2f2, #e0e0e0);
}
.actions button{
    width: 65px;
    height: 21px;
    color: #999;
    background: linear-gradient(#f6f6f6, #e8e8e8);
    border: 2px solid #b5b5b5;
    border-radius: 4px;
}
.actions .cancel{
    color: #111;
    background: linear-gradient(#fafafa, #d2d2d2);
    border-color: #666;
}
```
